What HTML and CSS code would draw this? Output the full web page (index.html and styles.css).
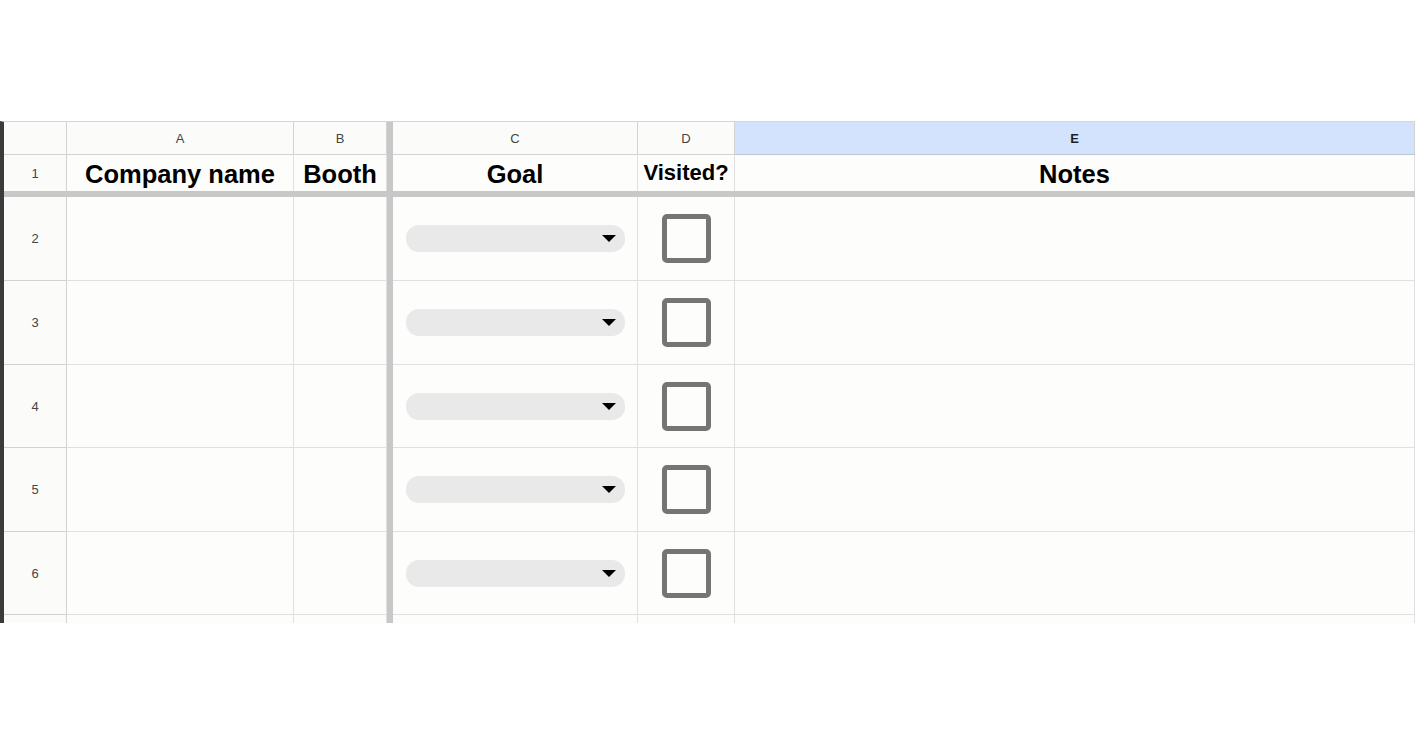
FILE: index.html
```html
<!DOCTYPE html>
<html lang="en">
<head>
    <meta charset="UTF-8">
    <meta name="viewport" content="width=device-width, initial-scale=1.0">
    <title>Booth tracker</title>
    <link rel="stylesheet" href="styles.css">
</head>
<body>
    <div class="sheet">
        <div class="row col-heads">
            <div class="corner"></div>
            <div class="cell head">A</div>
            <div class="cell head">B</div>
            <div class="freeze"></div>
            <div class="cell head">C</div>
            <div class="cell head">D</div>
            <div class="cell head selected">E</div>
        </div>
        <div class="row titles">
            <div class="rh">1</div>
            <div class="cell title">Company name</div>
            <div class="cell title">Booth</div>
            <div class="freeze"></div>
            <div class="cell title">Goal</div>
            <div class="cell title small">Visited?</div>
            <div class="cell title">Notes</div>
        </div>
        <div class="freeze-row"></div>

        <div class="row tall">
            <div class="rh">2</div>
            <div class="cell"></div>
            <div class="cell"></div>
            <div class="freeze"></div>
            <div class="cell pick"><div class="chip"><span class="arrow"></span></div></div>
            <div class="cell check"><span class="box"></span></div>
            <div class="cell"></div>
        </div>
        <div class="row tall">
            <div class="rh">3</div>
            <div class="cell"></div>
            <div class="cell"></div>
            <div class="freeze"></div>
            <div class="cell pick"><div class="chip"><span class="arrow"></span></div></div>
            <div class="cell check"><span class="box"></span></div>
            <div class="cell"></div>
        </div>
        <div class="row short">
            <div class="rh">4</div>
            <div class="cell"></div>
            <div class="cell"></div>
            <div class="freeze"></div>
            <div class="cell pick"><div class="chip"><span class="arrow"></span></div></div>
            <div class="cell check"><span class="box"></span></div>
            <div class="cell"></div>
        </div>
        <div class="row tall">
            <div class="rh">5</div>
            <div class="cell"></div>
            <div class="cell"></div>
            <div class="freeze"></div>
            <div class="cell pick"><div class="chip"><span class="arrow"></span></div></div>
            <div class="cell check"><span class="box"></span></div>
            <div class="cell"></div>
        </div>
        <div class="row short">
            <div class="rh">6</div>
            <div class="cell"></div>
            <div class="cell"></div>
            <div class="freeze"></div>
            <div class="cell pick"><div class="chip"><span class="arrow"></span></div></div>
            <div class="cell check"><span class="box"></span></div>
            <div class="cell"></div>
        </div>
        <!-- next row peeks in under the fold -->
        <div class="row tall">
            <div class="rh"></div>
            <div class="cell"></div>
            <div class="cell"></div>
            <div class="freeze"></div>
            <div class="cell"></div>
            <div class="cell"></div>
            <div class="cell"></div>
        </div>
    </div>
</body>
</html>
```

FILE: styles.css
```css
body {
    margin: 0;
    background: #fff;
    font-family: 'Liberation Sans', Arial, sans-serif;
    color: #000;
}
.sheet {
    margin-top: 121px;
    width: 1411px;
    height: 501px;
    overflow: hidden;
    border-left: 4px solid #3b3b3b;
    border-top: 1px solid #d6d6d6;
    background: #fdfdfc;
}
.row {
    display: grid;
    grid-template-columns: 63px 227px 93px 6px 245px 97px 680px;
}
.col-heads {
    height: 33px;
}
.titles {
    height: 36px;
}
.tall {
    height: 84px;
}
.short {
    height: 83px;
}
.cell,
.rh,
.corner {
    box-sizing: border-box;
    border-right: 1px solid #e0e0e0;
    border-bottom: 1px solid #e0e0e0;
}
.rh,
.corner {
    border-right-color: #d2d2d2;
    border-bottom-color: #d2d2d2;
    display: flex;
    align-items: center;
    justify-content: center;
    font-size: 13px;
    color: #444;
    background: #fbfbfa;
}
.titles .rh,
.titles .cell {
    border-bottom: none;
}
.head {
    display: flex;
    align-items: center;
    justify-content: center;
    font-size: 13px;
    color: #444;
    background: #fbfbfa;
    border-right-color: #d2d2d2;
    border-bottom-color: #d2d2d2;
}
.head.selected {
    background: #d3e3fd;
    color: #1f1f1f;
    font-weight: bold;
    border-bottom-color: #b9c6dc;
}
.title {
    display: flex;
    align-items: center;
    justify-content: center;
    font-size: 25.5px;
    font-weight: bold;
    padding-top: 2px;
}
.title.small {
    font-size: 22px;
    padding-top: 0;
}
.freeze {
    background: #c8c8c8;
}
.freeze-row {
    height: 6px;
    background: #c8c8c8;
}
.pick {
    display: flex;
    align-items: center;
    padding: 0 12px 0 13px;
}
.chip {
    flex: 1;
    height: 27px;
    border-radius: 13px;
    background: #e9e9ea;
    display: flex;
    align-items: center;
    justify-content: flex-end;
    padding-right: 9px;
}
.arrow {
    width: 0;
    height: 0;
    border-left: 7px solid transparent;
    border-right: 7px solid transparent;
    border-top: 7px solid #000;
}
.check {
    display: flex;
    align-items: center;
    justify-content: center;
}
.box {
    box-sizing: border-box;
    width: 49px;
    height: 49px;
    border: 5px solid #757575;
    border-radius: 5px;
    background: #fdfdfc;
}
```
